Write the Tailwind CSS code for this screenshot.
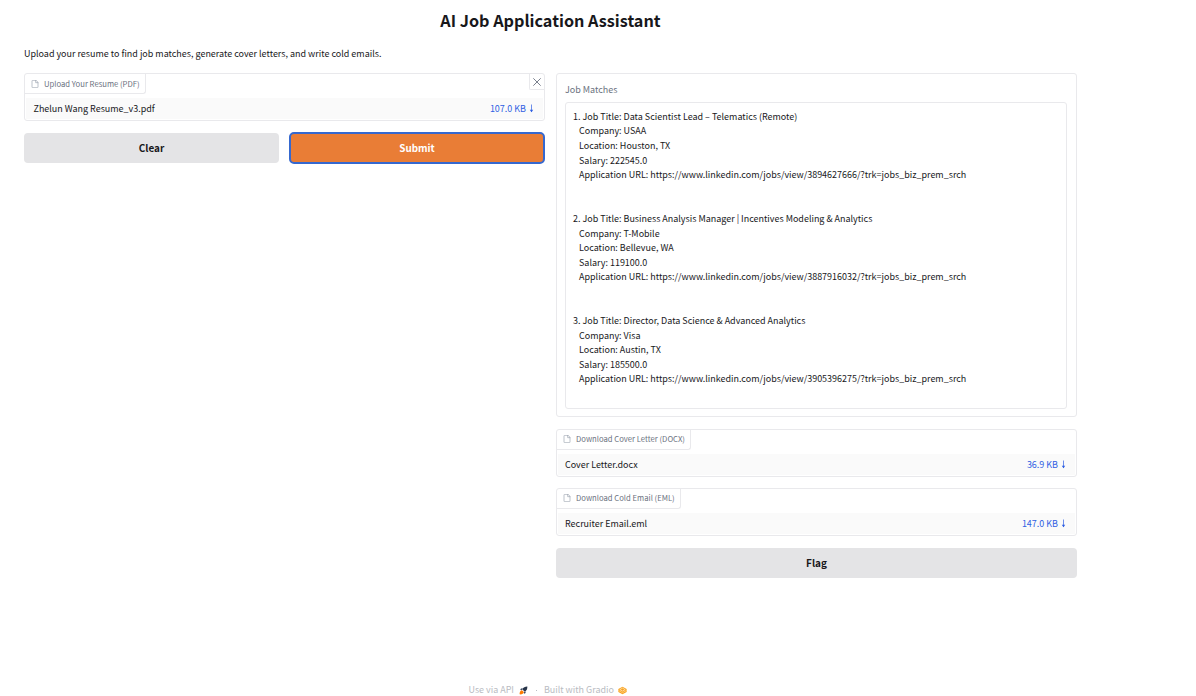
<!DOCTYPE html>
<html lang="en">
<head>
<meta charset="utf-8">
<title>AI Job Application Assistant</title>
<script src="https://cdn.jsdelivr.net/npm/@tailwindcss/browser@4"></script>
</head>
<body class="bg-white" style="font-family:'Noto Sans CJK SC','Noto Sans',sans-serif">
<div class="flex h-[696px] w-[1100px] flex-col overflow-hidden pl-6 pr-[23px] pt-2 text-[8.97px] leading-[14.6px] text-[#18181b]">
  <h1 class="text-center text-[16.22px] leading-6 font-bold">AI Job Application Assistant</h1>
  <p class="mt-[15px]">Upload your resume to find job matches, generate cover letters, and write cold emails.</p>

  <main class="mt-[11.4px] flex items-start gap-[11px]">
    <section class="flex w-[521px] flex-col">
      <div class="relative h-[48px] rounded-[3px] border border-[#e9e9ec] bg-white">
        <div class="flex h-5 w-[121px] items-center rounded-br-[3px] rounded-tl-[3px] border-b border-r border-[#e9e9ec] pl-[6px] text-[7.7px] text-[#6b7280]">
          <svg class="mr-[5px] mt-px h-[8px] w-[8px]" viewBox="0 0 24 24" fill="none" stroke="#9ca3af" stroke-width="2" stroke-linecap="round" stroke-linejoin="round"><path d="M14 1H5a2 2 0 0 0-2 2v18a2 2 0 0 0 2 2h14a2 2 0 0 0 2-2V8z"/><path d="M14 1v7h7"/></svg>
          <span class="pt-px">Upload Your Resume (PDF)</span>
        </div>
        <button class="absolute right-0 top-0 flex h-4 w-[15px] items-center justify-center rounded-bl-[2px] border-b border-l border-[#e9e9ec]" aria-label="Remove file">
          <svg class="mt-px h-2 w-2" viewBox="0 0 8 8" fill="none" stroke="#6b7280" stroke-width="0.9" stroke-linecap="round"><path d="M.6.6l6.8 6.8M7.4.6L.6 7.4"/></svg>
        </button>
        <div class="mx-px mt-[4px] flex h-[21px] items-center justify-between bg-[#fafafa] pl-[7.5px] pr-[9px] pt-[1.5px]">
          <span>Zhelun Wang Resume_v3.pdf</span>
          <span class="flex items-center gap-[3px] text-[#2f5fe3]">107.0 KB
            <svg class="-mt-[2px] h-[9px] w-[5px]" viewBox="0 0 5 9" fill="none" stroke="currentColor" stroke-width=".7"><path d="M2.5 .5V8"/><path d="M.8 5.8h3.4L2.5 8.2z" fill="currentColor" stroke="none"/></svg>
          </span>
        </div>
      </div>
      <div class="mt-[11px] flex gap-[10px]">
        <button class="mt-px h-[30px] w-[255px] rounded-[4px] bg-[#e4e4e6] text-[9.95px] font-bold">Clear</button>
        <button class="h-8 w-[256px] rounded-[5px] border-2 border-[#3568cf] bg-[#e97d36] text-[9.9px] font-bold text-white">Submit</button>
      </div>
    </section>

    <section class="flex w-[521px] flex-col">
      <div class="h-[344px] rounded-[3px] border border-[#e9e9ec] px-2 pt-[9px]">
        <div class="text-[#6b7280]">Job Matches</div>
        <pre class="mr-px mt-[4.4px] h-[307px] rounded-[3px] border border-[#e9e9ec] pl-[7px] pt-[6.8px]" style="font-family:inherit">1. Job Title: Data Scientist Lead – Telematics (Remote)
   Company: USAA
   Location: Houston, TX
   Salary: 222545.0
   Application URL: https://www.linkedin.com/jobs/view/3894627666/?trk=jobs_biz_prem_srch


2. Job Title: Business Analysis Manager | Incentives Modeling &amp; Analytics
   Company: T-Mobile
   Location: Bellevue, WA
   Salary: 119100.0
   Application URL: https://www.linkedin.com/jobs/view/3887916032/?trk=jobs_biz_prem_srch


3. Job Title: Director, Data Science &amp; Advanced Analytics
   Company: Visa
   Location: Austin, TX
   Salary: 185500.0
   Application URL: https://www.linkedin.com/jobs/view/3905396275/?trk=jobs_biz_prem_srch</pre>
      </div>

      <div class="mt-3 h-[48px] rounded-[3px] border border-[#e9e9ec]">
        <div class="flex h-5 w-[134px] items-center rounded-br-[3px] border-b border-r border-[#e9e9ec] pl-[6px] text-[7.7px] text-[#6b7280]">
          <svg class="mr-[5px] h-[8px] w-[8px]" viewBox="0 0 24 24" fill="none" stroke="#9ca3af" stroke-width="2" stroke-linecap="round" stroke-linejoin="round"><path d="M14 1H5a2 2 0 0 0-2 2v18a2 2 0 0 0 2 2h14a2 2 0 0 0 2-2V8z"/><path d="M14 1v7h7"/></svg>
          <span>Download Cover Letter (DOCX)</span>
        </div>
        <div class="mx-px mt-[4px] flex h-[21px] items-center justify-between bg-[#fafafa] pl-[7px] pr-[9px] pt-[1.5px]">
          <span>Cover Letter.docx</span>
          <span class="flex items-center gap-[3px] text-[#2f5fe3]">36.9 KB
            <svg class="-mt-[2px] h-[9px] w-[5px]" viewBox="0 0 5 9" fill="none" stroke="currentColor" stroke-width=".7"><path d="M2.5 .5V8"/><path d="M.8 5.8h3.4L2.5 8.2z" fill="currentColor" stroke="none"/></svg>
          </span>
        </div>
      </div>

      <div class="mt-[11px] h-[48px] rounded-[3px] border border-[#e9e9ec]">
        <div class="flex h-5 w-[124px] items-center rounded-br-[3px] border-b border-r border-[#e9e9ec] pl-[6px] text-[7.7px] text-[#6b7280]">
          <svg class="mr-[5px] h-[8px] w-[8px]" viewBox="0 0 24 24" fill="none" stroke="#9ca3af" stroke-width="2" stroke-linecap="round" stroke-linejoin="round"><path d="M14 1H5a2 2 0 0 0-2 2v18a2 2 0 0 0 2 2h14a2 2 0 0 0 2-2V8z"/><path d="M14 1v7h7"/></svg>
          <span>Download Cold Email (EML)</span>
        </div>
        <div class="mx-px mt-[4px] flex h-[21px] items-center justify-between bg-[#fafafa] pl-[7px] pr-[9px] pt-[1.5px]">
          <span>Recruiter Email.eml</span>
          <span class="flex items-center gap-[3px] text-[#2f5fe3]">147.0 KB
            <svg class="-mt-[2px] h-[9px] w-[5px]" viewBox="0 0 5 9" fill="none" stroke="currentColor" stroke-width=".7"><path d="M2.5 .5V8"/><path d="M.8 5.8h3.4L2.5 8.2z" fill="currentColor" stroke="none"/></svg>
          </span>
        </div>
      </div>

      <button class="mt-[12px] h-[30px] rounded-[4px] bg-[#e4e4e6] text-[10px] font-bold">Flag</button>
    </section>
  </main>

  <footer class="mt-auto flex items-center pl-[444.5px] text-[8.95px] leading-[12px] text-[#b9bcc2]">
    <span>Use via API</span>
    <svg class="ml-[5px] h-[9px] w-[9px]" viewBox="0 0 10 10"><path d="M9.3.7C6.8.6 5 1.6 3.6 3.6L6.4 6.4C8.4 5 9.4 3.2 9.3.7z" fill="#273449"/><path d="M4 2.2L2 3l-.6 1.5 2 .1zM7.8 6L7 8l-1.5.6-.1-2z" fill="#3d4b63"/><path d="M3.2 4.6C1.2 5 .5 6.8.7 9.3 3.2 9.5 5 8.8 5.4 6.8z" fill="#ff7c00"/></svg>
    <span class="ml-[8px] mr-[6px] h-px w-px bg-[#b9bcc2]"></span>
    <span class="ml-px">Built with Gradio</span>
    <svg class="ml-[4px] h-[9px] w-[9px]" viewBox="0 0 10 9"><path d="M5 .3L9.6 2.8V6.2L5 8.7.4 6.2V2.8z" fill="#f9a11b"/><path d="M5 1.9L8 3.5 5 5.1 2 3.5z" fill="none" stroke="#fff3dc" stroke-width=".7"/><path d="M.6 4.6L5 6.9l4.400-2.300" fill="none" stroke="#ffe0a6" stroke-width=".7"/></svg>
  </footer>
</div>
</body>
</html>
